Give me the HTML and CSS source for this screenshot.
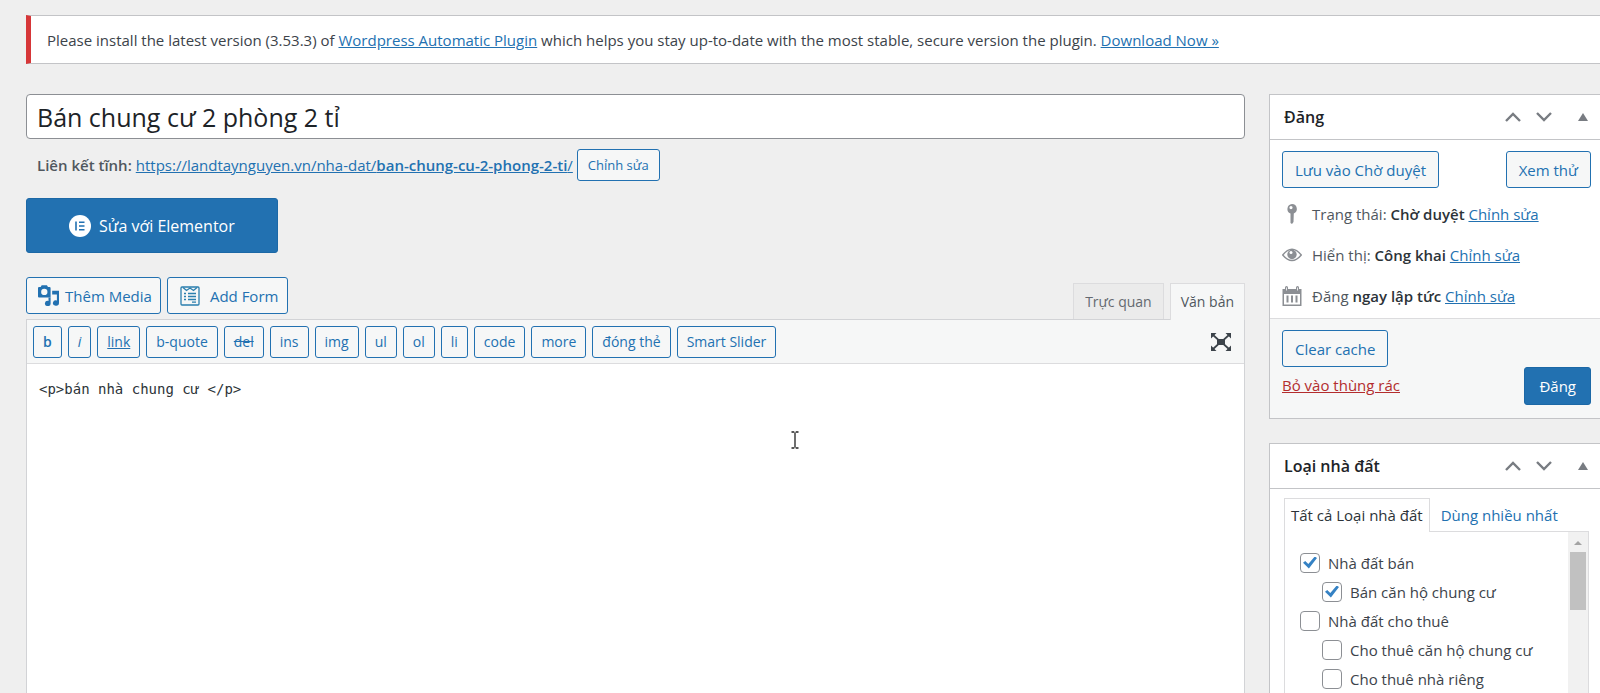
FILE: index.html
```html
<!DOCTYPE html>
<html lang="vi">
<head>
<meta charset="utf-8">
<title>Sửa bài viết</title>
<link rel="stylesheet" href="styles.css">
</head>
<body>
<svg class="defs" aria-hidden="true">
  <symbol id="up" viewBox="0 0 16 10"><path d="M1 9 8 2l7 7" fill="none" stroke="currentColor" stroke-width="2.4"/></symbol>
  <symbol id="down" viewBox="0 0 16 10"><path d="m1 1 7 7 7-7" fill="none" stroke="currentColor" stroke-width="2.4"/></symbol>
  <symbol id="tri" viewBox="0 0 10 8"><path d="M5 0l5 8H0z" fill="currentColor"/></symbol>
</svg>
<div class="page">
  <div class="notice">
    <p>Please install the latest version (3.53.3) of <a href="#">Wordpress Automatic Plugin</a> which helps you stay up-to-date with the most stable, secure version the plugin. <a href="#">Download Now »</a></p>
  </div>
  <div class="columns">
    <main class="main">
      <input class="title" type="text" aria-label="Tiêu đề" value="Bán chung cư 2 phòng 2 tỉ">
      <div class="permalink">
        <strong>Liên kết tĩnh:</strong>
        <a href="#">https://landtaynguyen.vn/nha-dat/<b>ban-chung-cu-2-phong-2-ti</b>/</a>
        <button type="button" class="btn small">Chỉnh sửa</button>
      </div>
      <button type="button" class="elementor">
        <svg viewBox="0 0 22 22" width="22" height="22"><circle cx="11" cy="11" r="11" fill="#fff"/><path d="M7 6.500v9M10 7.300h5.500M10 11h5.500M10 14.700h5.500" stroke="#2271b1" stroke-width="1.600" fill="none"/></svg>
        Sửa với Elementor
      </button>
      <div class="editor-top">
        <button type="button" class="btn media">
          <svg viewBox="0 0 20 20" width="21" height="21" fill="#2271b1"><path fill-rule="evenodd" d="M1 2h1.500l1-1.700h5L9.500 2H11q1 0 1 1v9H1q-1 0-1-1V3q0-1 1-1zM6 3.600a3 3 0 1 0 0 6 3 3 0 0 0 0-6z"/><path d="M13.500 5.500H20v11.700a2.900 2.600 0 1 1-2-2.500V9h-4.500zM10 12h2v5.500a2.700 2.500 0 1 1-2-2.300z"/></svg>
          Thêm Media
        </button>
        <button type="button" class="btn form">
          <svg viewBox="0 0 20 20" width="20" height="20" fill="none" stroke="#2a7fae" stroke-width="1.300"><rect x="1" y="1" width="18" height="18" rx="1"/><path d="M3 1.500 6.500 4.500 10 2l3.500 2.500 3.500-3M4 7.500h2M8 7.500h8M4 10.500h2M8 10.500h8M4 13.500h2M8 13.500h8M12 16.200h4"/></svg>
          Add Form
        </button>
        <div class="mode-tabs">
          <button type="button" class="mode">Trực quan</button>
          <button type="button" class="mode active">Văn bản</button>
        </div>
      </div>
      <div class="editor">
        <div class="toolbar">
          <button type="button" class="btn tag"><b>b</b></button>
          <button type="button" class="btn tag"><em>i</em></button>
          <button type="button" class="btn tag"><u>link</u></button>
          <button type="button" class="btn tag">b-quote</button>
          <button type="button" class="btn tag"><s>del</s></button>
          <button type="button" class="btn tag">ins</button>
          <button type="button" class="btn tag">img</button>
          <button type="button" class="btn tag">ul</button>
          <button type="button" class="btn tag">ol</button>
          <button type="button" class="btn tag">li</button>
          <button type="button" class="btn tag">code</button>
          <button type="button" class="btn tag">more</button>
          <button type="button" class="btn tag">đóng thẻ</button>
          <button type="button" class="btn tag">Smart Slider</button>
          <button type="button" class="expand" aria-label="Toàn màn hình">
            <svg viewBox="0 0 20 18" width="20" height="18"><path d="M6 6h8v6H6zM0 0h5.500L0 5.500zM20 0h-5.500L20 5.500zM0 18h5.500L0 12.500zM20 18h-5.500l5.500-5.500z" fill="#3c434a"/><path d="M1.500 1.500 7 6.500M18.500 1.500 13 6.500M1.500 16.500l5.500-5M18.500 16.500l-5.500-5" stroke="#3c434a" stroke-width="1.700"/></svg>
          </button>
        </div>
        <textarea class="code" aria-label="Nội dung" spellcheck="false">&lt;p&gt;bán nhà chung cư &lt;/p&gt;</textarea>
        <svg class="caret" viewBox="0 0 8 18" width="8" height="18" fill="none" stroke="#222" stroke-width="1.300"><path d="M.500 1h2.800M4.700 1h2.800M4 1.500v15M.500 17h2.800M4.700 17h2.800"/></svg>
      </div>
    </main>
    <aside class="side">
      <section class="box">
        <header class="box-head">
          <h2>Đăng</h2>
          <button type="button" aria-label="Lên"><svg width="16" height="10"><use href="#up"/></svg></button>
          <button type="button" aria-label="Xuống"><svg width="16" height="10"><use href="#down"/></svg></button>
          <button type="button" class="toggle" aria-label="Thu gọn"><svg width="10" height="8"><use href="#tri"/></svg></button>
        </header>
        <div class="save-row">
          <button type="button" class="btn big">Lưu vào Chờ duyệt</button>
          <button type="button" class="btn big">Xem thử</button>
        </div>
        <ul class="status">
          <li><svg viewBox="0 0 20 20" width="20" height="20" fill="#8c8f94"><path fill-rule="evenodd" d="M10 0a5 5 0 0 1 1.800 9.600L11.500 18 10 20l-1.500-1V9.600A5 5 0 0 1 10 0zM9 2a1.600 1.600 0 1 0 0 3.200A1.600 1.600 0 0 0 9 2z"/></svg><span>Trạng thái: <b>Chờ duyệt</b> <a href="#">Chỉnh sửa</a></span></li>
          <li><svg viewBox="0 0 20 14" width="20" height="14"><path d="M.700 7Q10-4.500 19.300 7 10 18 .700 7z" fill="none" stroke="#8c8f94" stroke-width="1.400"/><circle cx="10" cy="6.500" r="4.700" fill="#8c8f94"/><circle cx="9" cy="4.500" r="1.500" fill="#fff"/></svg><span>Hiển thị: <b>Công khai</b> <a href="#">Chỉnh sửa</a></span></li>
          <li><svg viewBox="0 0 20 20" width="20" height="20" fill="#8c8f94"><path fill-rule="evenodd" d="M.500 3H3V1.500a1.500 1.500 0 0 1 3 0V3h8V1.500a1.500 1.500 0 0 1 3 0V3h2.500v17H.500zM2 8v10.500h16V8z"/><path d="M4.500 9.500h2v7h-2zM9 9.500h2v7H9zM13.500 9.500h2v7h-2z"/><path d="M4.500 1.500v3M15.500 1.500v3" stroke="#fff" stroke-width=".8"/></svg><span>Đăng <b>ngay lập tức</b> <a href="#">Chỉnh sửa</a></span></li>
        </ul>
        <footer class="actions">
          <div class="actions-left">
            <button type="button" class="btn big">Clear cache</button>
            <a class="trash" href="#">Bỏ vào thùng rác</a>
          </div>
          <button type="button" class="publish">Đăng</button>
        </footer>
      </section>
      <section class="box grow">
        <header class="box-head">
          <h2>Loại nhà đất</h2>
          <button type="button" aria-label="Lên"><svg width="16" height="10"><use href="#up"/></svg></button>
          <button type="button" aria-label="Xuống"><svg width="16" height="10"><use href="#down"/></svg></button>
          <button type="button" class="toggle" aria-label="Thu gọn"><svg width="10" height="8"><use href="#tri"/></svg></button>
        </header>
        <div class="cats">
          <div class="cat-tabs">
            <a class="current" href="#">Tất cả Loại nhà đất</a>
            <a href="#">Dùng nhiều nhất</a>
          </div>
          <div class="cat-panel">
            <div class="cat-list">
              <label><input type="checkbox" checked>Nhà đất bán</label>
              <label class="child"><input type="checkbox" checked>Bán căn hộ chung cư</label>
              <label><input type="checkbox">Nhà đất cho thuê</label>
              <label class="child"><input type="checkbox">Cho thuê căn hộ chung cư</label>
              <label class="child"><input type="checkbox">Cho thuê nhà riêng</label>
            </div>
            <div class="scroll">
              <svg viewBox="0 0 8 4" width="8" height="4"><path d="M4 0l4 4H0z" fill="#a3a3a3"/></svg>
              <div class="thumb"></div>
            </div>
          </div>
        </div>
      </section>
    </aside>
  </div>
</div>
</body>
</html>
```
FILE: styles.css
```css
* { box-sizing: border-box; }
body {
  margin: 0;
  background: #efefef;
  color: #3c434a;
  font: 15px/20px "Open Sans", "Noto Sans", sans-serif;
}
button, input, textarea { font: inherit; color: inherit; margin: 0; }
button { cursor: pointer; white-space: nowrap; }
a { color: #2271b1; }
b, strong { font-weight: 600; }
svg { display: block; flex: none; }
.defs { position: absolute; width: 0; height: 0; }

.page {
  height: 100vh;
  overflow: hidden;
  padding: 15px 0 0 26px;
  display: flex;
  flex-direction: column;
}
.notice {
  background: #fff;
  border: 1px solid #c3c4c7;
  border-left: 5px solid #d63638;
  border-right: 0;
  padding: 14px 16px 13px;
  margin-bottom: 30px;
}
.notice p { margin: 0; }
.columns { flex: 1; min-height: 0; display: flex; gap: 24px; }
.main { flex: 1; min-width: 0; display: flex; flex-direction: column; align-items: stretch; }

.title {
  height: 45px;
  border: 1px solid #8c8f94;
  border-radius: 4px;
  background: #fff;
  padding: 0 10px;
  font-size: 25px;
  color: #1d2327;
}
.permalink {
  display: flex;
  align-items: center;
  gap: 4px;
  padding: 10px 0 0 11px;
  color: #50575e;
}
.btn {
  background: #f6f7f7;
  border: 1px solid #2271b1;
  border-radius: 3px;
  color: #2271b1;
  display: flex;
  align-items: center;
}
.small { height: 32px; padding: 0 10px; font-size: 13px; }
.elementor {
  align-self: flex-start;
  height: 55px;
  margin: 17px 0 24px;
  padding: 0 42px;
  border: 1px solid #1c68a6;
  border-radius: 3px;
  background: #2271b1;
  color: #fff;
  font-size: 16px;
  display: flex;
  align-items: center;
  gap: 8px;
}
.editor-top { display: flex; align-items: flex-start; gap: 6px; }
.editor-top .btn { height: 37px; gap: 6px; margin-bottom: 5px; }
.editor-top .media { padding: 0 8px 0 11px; }
.editor-top .form { padding: 0 9px 0 12px; gap: 10px; }
.mode-tabs { margin-left: auto; align-self: flex-end; display: flex; gap: 6px; }
.mode {
  height: 36px;
  border: 1px solid #dcdcde;
  border-bottom: 0;
  background: #ebebeb;
  padding: 0 11px;
  font-size: 14px;
  color: #646970;
}
.mode.active {
  background: #f6f7f7;
  color: #50575e;
  margin-bottom: -1px;
  height: 37px;
  padding: 0 10px;
  z-index: 1;
}
.editor {
  flex: 1;
  position: relative;
  display: flex;
  flex-direction: column;
  border: 1px solid #d2d3d6;
  border-bottom: 0;
  background: #fff;
}
.toolbar {
  display: flex;
  align-items: center;
  gap: 6px;
  padding: 6px 13px 5px 6px;
  background: #f6f7f7;
  border-bottom: 1px solid #dcdcde;
}
.tag { height: 32px; padding: 0 9px; font-size: 14px; }
.expand { margin-left: auto; border: 0; padding: 0; background: none; }
.code {
  flex: 1;
  border: 0;
  outline: 0;
  resize: none;
  padding: 15px 12px;
  background: #fff;
  color: #2c3338;
  font: 14px/21px "DejaVu Sans Mono", monospace;
}
.caret { position: absolute; left: 764px; top: 111px; }

.side { width: 331px; display: flex; flex-direction: column; gap: 24px; }
.box { background: #fff; border: 1px solid #c3c4c7; border-right: 0; }
.grow { flex: 1; min-height: 0; display: flex; flex-direction: column; border-bottom: 0; }
.box-head {
  display: flex;
  align-items: center;
  height: 45px;
  padding: 0 12px 0 14px;
  border-bottom: 1px solid #c3c4c7;
}
.box-head h2 { margin: 0 auto 0 0; font-size: 16px; font-weight: 600; color: #1d2327; }
.box-head button { border: 0; padding: 0; background: none; color: #787c82; margin-left: 15px; }
.box-head .toggle { margin-left: 26px; }
.save-row { display: flex; justify-content: space-between; padding: 11px 9px 0 12px; }
.big { height: 37px; padding: 0 12px; }
.status { list-style: none; margin: 0; padding: 16px 12px 12px; display: grid; gap: 21px; }
.status li { display: flex; align-items: center; gap: 10px; color: #50575e; }
.status b { color: #2c3338; }
.actions {
  display: flex;
  justify-content: space-between;
  align-items: flex-end;
  padding: 11px 9px 13px 12px;
  border-top: 1px solid #dcdcde;
  background: #f6f7f7;
}
.actions-left { display: flex; flex-direction: column; align-items: flex-start; gap: 8px; padding-bottom: 10px; }
.trash { color: #b32d2e; }
.publish {
  height: 38px;
  padding: 0 14px;
  border: 1px solid #1c68a6;
  border-radius: 3px;
  background: #2271b1;
  color: #fff;
}
.cats { flex: 1; min-height: 0; padding: 9px 11px 0 14px; display: flex; flex-direction: column; }
.cat-tabs { display: flex; }
.cat-tabs a { padding: 6px 10px; text-decoration: none; border: 1px solid transparent; border-bottom: 0; white-space: nowrap; }
.cat-tabs .current {
  padding: 6px 6px;
  margin-bottom: -1px;
  border-color: #dcdcde;
  background: #fff;
  color: #2c3338;
  z-index: 1;
}
.cat-panel { flex: 1; display: flex; border: 1px solid #dcdcde; border-bottom: 0; }
.cat-list { flex: 1; padding: 16px 15px 0; }
.cat-list label { display: flex; align-items: center; gap: 8px; height: 29px; }
.cat-list .child { padding-left: 22px; }
.cat-list input {
  appearance: none;
  width: 20px;
  height: 20px;
  border: 1px solid #8c8f94;
  border-radius: 4px;
  background: #fff;
  display: grid;
  place-items: center;
}
.cat-list input:checked::before {
  content: "";
  width: 14px;
  height: 12px;
  background: #3582c4;
  clip-path: polygon(0 52%, 16% 38%, 38% 62%, 84% 0, 100% 12%, 42% 100%);
}
.scroll {
  width: 20px;
  padding: 9px 2px 0;
  background: #f1f1f1;
  display: flex;
  flex-direction: column;
  align-items: center;
  gap: 7px;
}
.thumb { width: 100%; height: 58px; background: #c1c1c1; }
```
